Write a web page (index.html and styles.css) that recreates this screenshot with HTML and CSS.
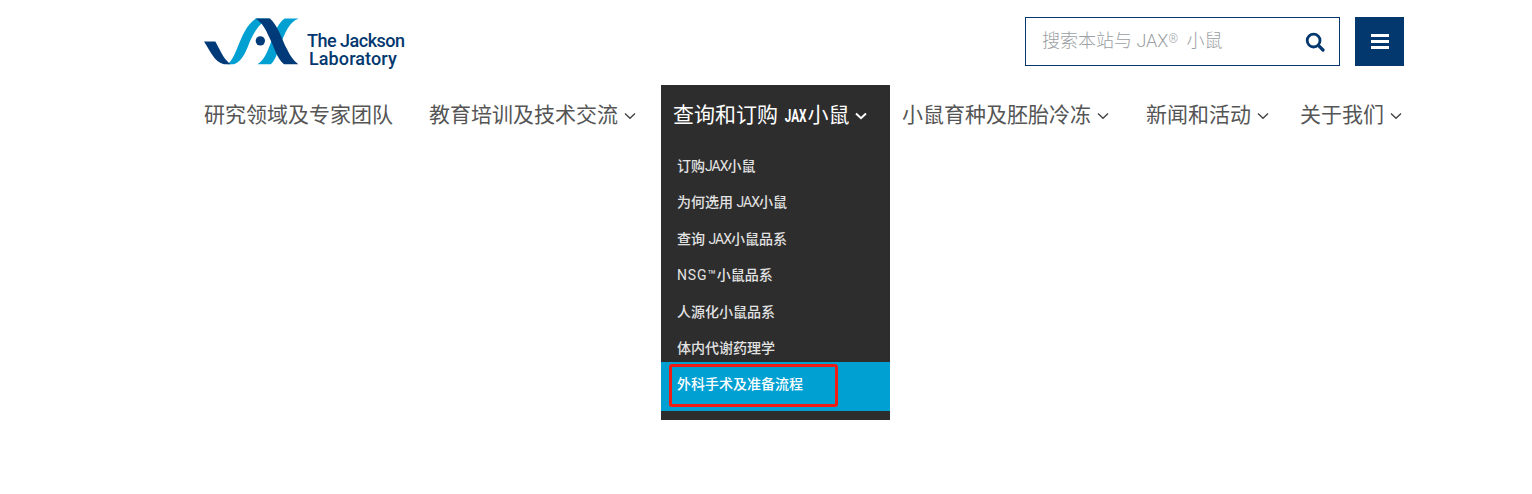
FILE: index.html
```html
<!DOCTYPE html>
<html lang="zh-CN">
<head>
  <meta charset="UTF-8">
  <title>The Jackson Laboratory</title>
  <link rel="stylesheet" href="styles.css">
</head>
<body>

<div class="site">
  <header class="top">
    <a class="logo" href="#">
      <svg class="logo-mark" viewBox="28 40 285 140" aria-hidden="true">
        <path fill="#00a0d2" d="M312 41 C285 50 270 85 258 118 C248 145 240 170 228 178 H188 C210 168 220 135 232 105 C244 75 250 55 270 41 Z"/>
        <path fill="#00a0d2" d="M98 178 C120 165 130 115 150 80 C160 62 170 50 184 41 H226 C200 48 182 75 168 105 C155 135 145 170 118 178 Z"/>
        <path fill="#003a78" d="M182 41 H226 C250 62 262 105 278 135 C286 152 296 168 311 178 H268 C246 160 238 125 224 98 C214 75 202 52 182 41 Z"/>
        <path fill="#003a78" d="M28 110 H62 C74 130 86 164 108 178 H88 C58 172 46 136 28 110 Z"/>
        <circle fill="#003a78" cx="197" cy="108" r="14"/>
      </svg>
      <span class="logo-text">The Jackson<span class="logo-line">Laboratory</span></span>
    </a>
    <div class="tools">
      <form class="search">
        <span class="search-hint">搜索本站与 JAX<span class="reg">®</span> 小鼠</span>
        <svg class="search-icon" viewBox="0 0 20 20" aria-hidden="true">
          <circle cx="8.6" cy="8.6" r="6.4" fill="none" stroke="#03386f" stroke-width="2.8"/>
          <path d="M13.4 13.4 L18 18" stroke="#03386f" stroke-width="3.2" stroke-linecap="round"/>
        </svg>
      </form>
      <button class="menu-btn" type="button" aria-label="菜单"><span></span><span></span><span></span></button>
    </div>
  </header>

  <nav class="nav">
    <a class="nav-item" href="#">研究领域及专家团队</a>
    <a class="nav-item" href="#">教育培训及技术交流<svg class="chev" viewBox="0 0 12 8"><path d="M1 1.5 L6 6.2 L11 1.5"/></svg></a>
    <div class="nav-item active">
      查询和订购 <span class="jax">JAX</span>小鼠<svg class="chev" viewBox="0 0 12 8"><path d="M1 1.5 L6 6.2 L11 1.5"/></svg>
      <ul class="submenu">
        <li>订购<span class="latin">JAX</span>小鼠</li>
        <li>为何选用 <span class="latin">JAX</span>小鼠</li>
        <li>查询 <span class="latin">JAX</span>小鼠品系</li>
        <li><span class="nsg">NSG™</span>小鼠品系</li>
        <li>人源化小鼠品系</li>
        <li>体内代谢药理学</li>
        <li class="current">外科手术及准备流程<span class="mark"></span></li>
      </ul>
    </div>
    <a class="nav-item" href="#">小鼠育种及胚胎冷冻<svg class="chev" viewBox="0 0 12 8"><path d="M1 1.5 L6 6.2 L11 1.5"/></svg></a>
    <a class="nav-item" href="#">新闻和活动<svg class="chev" viewBox="0 0 12 8"><path d="M1 1.5 L6 6.2 L11 1.5"/></svg></a>
    <a class="nav-item" href="#">关于我们<svg class="chev" viewBox="0 0 12 8"><path d="M1 1.5 L6 6.2 L11 1.5"/></svg></a>
  </nav>
</div>

</body>
</html>
```

FILE: styles.css
```css
body {
  margin: 0;
  background-color: #fff;
  font-family: Roboto, "Noto Sans CJK SC", sans-serif;
  color: #444;
}

.site {
  width: 1200px;
  height: 494px;
  margin-left: 204px;
}

.top {
  display: flex;
  justify-content: space-between;
  height: 85px;
  padding-top: 17px;
  box-sizing: border-box;
}

.logo {
  display: flex;
  align-items: flex-start;
  height: 49px;
  padding-top: 1px;
  box-sizing: border-box;
  color: #03386f;
  text-decoration: none;
}

.logo-mark {
  width: 95px;
  height: 47px;
  flex: none;
}

.logo-text {
  margin: 14px 0 0 8px;
  font-size: 18px;
  font-weight: 500;
  line-height: 18px;
  letter-spacing: -0.5px;
  white-space: nowrap;
}

.logo-line {
  display: block;
  margin-left: 2px;
  letter-spacing: 0.1px;
}

.tools {
  display: flex;
  gap: 15px;
}

.search {
  display: flex;
  align-items: center;
  justify-content: space-between;
  width: 315px;
  height: 49px;
  margin: 0;
  padding: 0 14px 0 16px;
  border: 1px solid #03386f;
  box-sizing: border-box;
}

.search-hint {
  margin-bottom: 5px;
  font-size: 18px;
  color: #9aa0a4;
  font-weight: 300;
}

.reg {
  margin-right: 4px;
  font-size: 12px;
  vertical-align: 4px;
}

.search-icon {
  width: 20px;
  height: 20px;
}

.menu-btn {
  display: flex;
  flex-direction: column;
  align-items: center;
  justify-content: center;
  gap: 3px;
  width: 49px;
  height: 49px;
  padding: 0;
  border: none;
  background-color: #03386f;
}

.menu-btn span {
  display: block;
  width: 18px;
  height: 3px;
  background-color: #fff;
}

.nav {
  display: flex;
  margin-left: -12px;
}

.nav-item {
  display: block;
  flex: none;
  height: 60px;
  padding: 0 12px;
  font-size: 21px;
  line-height: 60px;
  color: #555;
  text-decoration: none;
  white-space: nowrap;
}

.nav-item:nth-child(2) {
  margin-left: 12px;
}

.nav-item:nth-child(3) {
  margin-left: 13px;
}

.nav-item:nth-child(5) {
  margin-left: 13px;
}

.nav-item:nth-child(6) {
  margin-left: 7px;
}

.chev {
  width: 12px;
  height: 8px;
  margin-left: 6px;
  vertical-align: 2px;
}

.chev path {
  fill: none;
  stroke: #444;
  stroke-width: 1.4;
}

.active {
  position: relative;
  width: 229px;
  padding-right: 0;
  box-sizing: border-box;
  background-color: #2d2d2d;
  color: #fff;
}

.active .chev path {
  stroke: #fff;
  stroke-width: 2;
}

.jax {
  display: inline-block;
  margin: 0 -5.5px;
  font-size: 19px;
  font-weight: 700;
  transform: scaleX(0.62);
}

.submenu {
  position: absolute;
  left: 0;
  top: 60px;
  width: 229px;
  margin: 0;
  padding: 3px 0 9px;
  list-style: none;
  background-color: #2d2d2d;
}

.submenu li {
  padding: 0 16px;
  font-size: 14px;
  font-weight: 500;
  line-height: 36.4px;
  color: #e2e2e2;
}

.latin {
  font-weight: 400;
  letter-spacing: -1px;
}

.nsg {
  font-weight: 400;
  letter-spacing: 0.8px;
}

.submenu .current {
  position: relative;
  margin-top: -4px;
  padding-top: 4px;
  padding-bottom: 9px;
  line-height: 36px;
  background-color: #00a0d2;
  color: #fff;
}

.mark {
  position: absolute;
  left: 8px;
  top: 2px;
  width: 169px;
  height: 43px;
  border: 3px solid #f01c14;
  border-radius: 3px;
  box-sizing: border-box;
}
```
